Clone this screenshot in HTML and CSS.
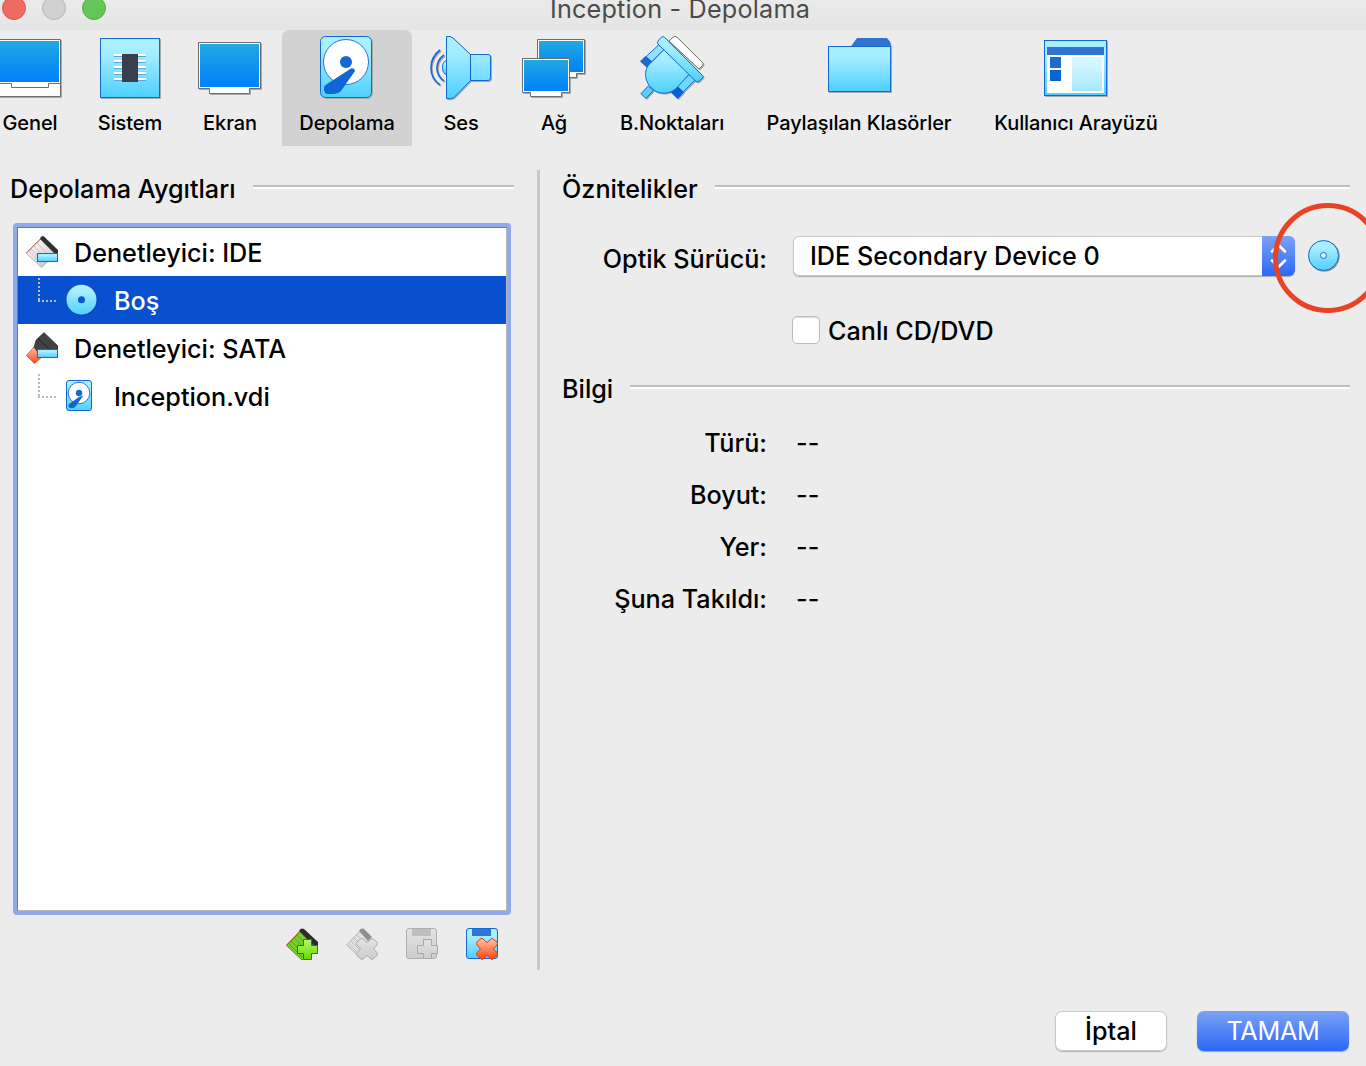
FILE: index.html
```html
<!DOCTYPE html>
<html lang="tr">
<head>
<meta charset="utf-8">
<title>Inception - Depolama</title>
<link rel="stylesheet" href="styles.css">
</head>
<body>
<svg class="defs" width="0" height="0">
  <defs>
    <linearGradient id="screen" x1="0" y1="0" x2="0" y2="1"><stop offset="0" stop-color="#20a9e2"/><stop offset="1" stop-color="#0080fb"/></linearGradient>
    <linearGradient id="ice" x1="0" y1="0" x2="0" y2="1"><stop offset="0" stop-color="#aaf1ff"/><stop offset=".25" stop-color="#a6edff"/><stop offset="1" stop-color="#4dd0ff"/></linearGradient>
    <linearGradient id="green" x1="0" y1="0" x2="0" y2="1"><stop offset="0" stop-color="#b4f76c"/><stop offset="1" stop-color="#62d800"/></linearGradient>
    <linearGradient id="red" x1="0" y1="0" x2="0" y2="1"><stop offset="0" stop-color="#ffc3a6"/><stop offset="1" stop-color="#ff4318"/></linearGradient>
    <linearGradient id="grey" x1="0" y1="0" x2="0" y2="1"><stop offset="0" stop-color="#e4e4e4"/><stop offset="1" stop-color="#cccccc"/></linearGradient>
    <linearGradient id="silver" x1="0" y1="0" x2="1" y2="1"><stop offset="0" stop-color="#ffffff"/><stop offset="1" stop-color="#c4c4c4"/></linearGradient>
  </defs>
</svg>

<header class="titlebar">
  <div class="lights"><i class="light close"></i><i class="light min"></i><i class="light max"></i></div>
  <h1 class="title">Inception - Depolama</h1>
</header>

<nav class="toolbar">
  <a class="tool">
    <svg class="icon" viewBox="-4 34 68 68">
      <path d="M-5 39.5H60.5V96.5H-5Z" fill="#fff" stroke="#6d6d6d"/>
      <path d="M-3 41H59V82H-3Z" fill="url(#screen)"/>
      <path d="M-3 83.5H11.5V87.5H48.5V83.5H60" fill="none" stroke="#6d6d6d"/>
    </svg>
    <span>Genel</span>
  </a>
  <a class="tool">
    <svg class="icon" viewBox="96 34 68 68">
      <rect x="100.500" y="38.500" width="59" height="59" fill="url(#ice)" stroke="#1267d0"/>
      <path d="M114 55H146M114 61H146M114 67H146M114 73H146M114 79H146" stroke="#fff" stroke-width="2"/>
      <path d="M114 56.500H146M114 62.500H146M114 68.500H146M114 74.500H146M114 80.500H146" stroke="#5ba6dc"/>
      <rect x="122" y="54" width="16" height="28" fill="#3b3f4b"/>
    </svg>
    <span>Sistem</span>
  </a>
  <a class="tool">
    <svg class="icon" viewBox="196 34 68 68">
      <path d="M198.500 42.500H260.500V88.500H249.500V93.500H209.500V88.500H198.500Z" fill="#fff" stroke="#6d6d6d"/>
      <rect x="200" y="44" width="59" height="43" fill="url(#screen)"/>
    </svg>
    <span>Ekran</span>
  </a>
  <a class="tool active">
    <svg class="icon" viewBox="313 34 68 68">
      <rect x="320.500" y="36.500" width="51" height="61" rx="5" fill="url(#ice)" stroke="#1267d0"/>
      <circle cx="346" cy="62" r="22.500" fill="#fff" stroke="#2a73d2"/>
      <circle cx="346" cy="62" r="6" fill="#1569d3"/>
      <path d="M351 68.500Q354.500 67.500 355 71L341 91Q338 94 334 94H327Q323.500 93 324 87Q324.500 85.500 327 84Z" fill="#0f66d4"/>
    </svg>
    <span>Depolama</span>
  </a>
  <a class="tool">
    <svg class="icon" viewBox="427 34 68 68">
      <path d="M447 60.500Q442.500 61 442.500 67.500T447 74.500Z" fill="url(#ice)" stroke="#1267d0"/>
      <path d="M440 50Q431 57 431 68T440 85M444 55Q437 60 437 68T444 81" fill="none" stroke="#1f6bd0" stroke-width="1.700"/>
      <path d="M446.500 36.500H450L453 38L470.500 54.500H488Q490.500 54.500 490.500 57V78Q490.500 80.500 488 80.500H470.500L454 97.500Q451 99.500 446.500 98.500Z" fill="url(#ice)" stroke="#1267d0"/>
      <path d="M470.500 54V81" stroke="#1267d0"/>
    </svg>
    <span>Ses</span>
  </a>
  <a class="tool">
    <svg class="icon" viewBox="520 34 68 68">
      <path d="M537.500 39.500H584.500V73.500H576.500V77.500H550V73.500H537.500Z" fill="#fff" stroke="#6d6d6d"/>
      <rect x="539" y="41" width="44" height="31" fill="url(#screen)"/>
      <path d="M522.500 58.500H569.500V92.500H561.500V96.500H530.500V92.500H522.500Z" fill="#fff" stroke="#6d6d6d"/>
      <rect x="524" y="60" width="44" height="31" fill="url(#screen)"/>
    </svg>
    <span>Ağ</span>
  </a>
  <a class="tool">
    <svg class="icon" viewBox="638 34 68 68">
      <path d="M669 41L673 37.200Q675 35.500 677 37.200L702.500 62.500Q703.800 64 702.500 65.500L699 69Z" fill="#fff" stroke="#6d6d6d"/>
      <path d="M659.300 44.300L664.300 49.300 652 61.700 646 56.700Z" fill="#8fe3ff" stroke="#1267d0"/>
      <path d="M645.500 56L652.300 62.300 647 67.800 640 61.200Z" fill="#1b6ad2"/>
      <path d="M689.300 74L695.300 80 683 92 677 86.500Z" fill="#6cd9ff" stroke="#1267d0"/>
      <path d="M677.500 86L684 92.300 677.700 98.900 671 92.500Z" fill="#0062d6"/>
      <path d="M648.300 86L653.300 90.500 646 98.500 641 93.500Z" fill="#57d0fb" stroke="#1267d0"/>
      <path d="M664.300 49.300L689.300 74L678 86.500C672 94 659 96 651.500 88C644 81 643 68 652 61.700Z" fill="url(#ice)" stroke="#1267d0"/>
      <path d="M658 44Q656.800 42.500 658 41L661 37.500Q663 36 664.500 37.200L702.500 75.500Q703.800 76.800 702.500 78L699 81.300Q697.500 82.500 696 81.500Z" fill="url(#ice)" stroke="#1267d0"/>
    </svg>
    <span>B.Noktaları</span>
  </a>
  <a class="tool">
    <svg class="icon" viewBox="825 34 68 68">
      <path d="M850.500 47L857 38H887L890 42 891 47Z" fill="#3074d2"/>
      <rect x="828.500" y="46.500" width="62" height="45" fill="url(#ice)" stroke="#1267d0"/>
    </svg>
    <span>Paylaşılan Klasörler</span>
  </a>
  <a class="tool">
    <svg class="icon" viewBox="1042 34 68 68">
      <rect x="1044.500" y="40.500" width="62" height="55" fill="url(#ice)" stroke="#1267d0"/>
      <rect x="1047" y="47" width="57" height="46" fill="#fff"/>
      <rect x="1047" y="47" width="57" height="8" fill="#3074d2"/>
      <rect x="1050" y="57" width="11" height="11" fill="#1f6bd2"/>
      <rect x="1050" y="70" width="11" height="11" fill="#0664d4"/>
      <rect x="1072" y="57" width="30" height="34" fill="url(#ice)" opacity=".5"/>
    </svg>
    <span>Kullanıcı Arayüzü</span>
  </a>
</nav>

<main class="content">
  <section class="devices">
    <h2 class="heading">
      <span>Depolama Aygıtları</span>
      <i class="rule"></i>
    </h2>
    <ul class="tree">
      <li class="row">
        <svg class="ctl" viewBox="26 236 32 32">
          <path d="M42 237L57 253 41.500 267.500 26 253Z" fill="url(#silver)" stroke="#9a9a9a" stroke-width=".7"/>
          <path d="M37 243L51 258M34 246L48 261M31 249L45 264M29 251L43 266" stroke="#b8b8b8" stroke-width=".7"/>
          <path d="M26.500 253L41 238.500" stroke="#e2562c"/>
          <path d="M40 239Q41 235 44 236.500L58 250V253H54Z" fill="#303030"/>
          <rect x="37.500" y="253.500" width="20" height="8" fill="url(#ice)" stroke="#1267d0"/>
        </svg>
        <span>Denetleyici: IDE</span>
      </li>
      <li class="row child selected">
        <i class="branch"></i>
        <svg class="disc" viewBox="66 283 32 32">
          <circle cx="82" cy="299.500" r="15.300" fill="#063e9f"/>
          <circle cx="81.500" cy="298.700" r="15" fill="url(#ice)"/>
          <circle cx="81.500" cy="298.700" r="3.500" fill="#0a56cc"/>
        </svg>
        <span>Boş</span>
      </li>
      <li class="row">
        <svg class="ctl" viewBox="26 332 32 32">
          <path d="M34 347L43 356 34.500 363.500 26.500 355.500Z" fill="url(#red)" stroke="#d8481c" stroke-width=".8"/>
          <path d="M44 332.500L58 346V350L50 354H39L34 347L36 340Z" fill="#424242" stroke="#2d2d2d" stroke-width=".6"/>
          <path d="M38 338.500L50 350" stroke="#222"/>
          <rect x="37.500" y="349.500" width="20" height="8" fill="url(#ice)" stroke="#1267d0"/>
        </svg>
        <span>Denetleyici: SATA</span>
      </li>
      <li class="row child">
        <i class="branch"></i>
        <svg class="disc" viewBox="66 380 32 32">
          <rect x="66.500" y="380.500" width="25" height="30" rx="2.500" fill="url(#ice)" stroke="#1267d0"/>
          <circle cx="79" cy="393" r="10.800" fill="#fff" stroke="#2a73d2"/>
          <circle cx="79" cy="393" r="3.200" fill="#1569d3"/>
          <path d="M83.500 395.500L75 407Q74 408.500 70 408Q68 407 69 404L79 397Z" fill="#0f66d4"/>
        </svg>
        <span>Inception.vdi</span>
      </li>
    </ul>
    <div class="actions">
      <svg viewBox="286 928 32 32">
        <path d="M302 929L318 945 302 960 286.500 945.500Z" fill="#72cf25" stroke="#3e7a10" stroke-width=".8"/>
        <path d="M297 935L311 949M294 938L308 952M291 941L305 955M289 944L302 957" stroke="#4f9f18" stroke-width=".8"/>
        <path d="M286.500 945L300 931.500" stroke="#e0411c"/>
        <path d="M299 931Q301 927.500 304 929L318 942V945H313Z" fill="#2c2c2c"/>
        <path d="M303.500 939.500H311.500V945.500H317.500V953.500H311.500V959.500H303.500V953.500H297.500V945.500H303.500Z" fill="url(#green)" stroke="#2c7c08"/>
      </svg>
      <svg viewBox="346 928 32 32">
        <path d="M361 930L372 941 361 958 346.500 945Z" fill="#e0e0e0" stroke="#a8a8a8" stroke-width=".8"/>
        <path d="M357 935L366 944M354 938L363 947M351 941L360 950M349 944L358 953" stroke="#b6b6b6" stroke-width=".8"/>
        <path d="M359 931Q361 927.500 364 929L372 937 368 941Z" fill="#8f8f8f"/>
        <path d="M361 938.500Q362 938 363 939L367 942.500 371 939Q372 938 373 939L377 942Q378 943.500 377 945L373.500 949 377 952.500Q378 954 377 955.500L373 959Q372 960 371 959L367 955.500 363 959Q362 960 361 959L357 955.500Q356 954 357 952.500L360.500 949 357 945Q356 943.500 357 942Z" fill="url(#grey)" stroke="#ababab"/>
      </svg>
      <svg viewBox="406 928 32 32">
        <rect x="406.500" y="928.500" width="30" height="30" rx="2.500" fill="url(#grey)" stroke="#adadad"/>
        <rect x="412" y="929" width="19" height="7" fill="#bfbfbf"/>
        <path d="M423.500 939.500H431.500V945.500H437.500V953.500H431.500V958.500H423.500V953.500H417.500V945.500H423.500Z" fill="url(#grey)" stroke="#a8a8a8"/>
      </svg>
      <svg viewBox="466 928 32 32">
        <rect x="466.500" y="928.500" width="31" height="30" rx="2.500" fill="url(#ice)" stroke="#1267d0"/>
        <rect x="472" y="929" width="19" height="7" fill="#2f75d3"/>
        <path d="M481 938.500Q482 938 483 939L487 942.500 491 939Q492 938 493 939L497 942Q498 943.500 497 945L493.500 949 497 952.500Q498 954 497 955.500L493 959Q492 960 491 959L487 955.500 483 959Q482 960 481 959L477 955.500Q476 954 477 952.500L480.500 949 477 945Q476 943.500 477 942Z" fill="url(#red)" stroke="#dc3c12"/>
      </svg>
    </div>
  </section>

  <section class="attributes">
    <h2 class="heading">
      <span>Öznitelikler</span>
      <i class="rule"></i>
    </h2>
    <div class="drive">
      <span class="label">Optik Sürücü:</span>
      <div class="combo">
        <span class="combo-text">IDE Secondary Device 0</span>
        <svg class="combo-arrows" viewBox="1262 236 33 40">
          <path d="M1272 251.500L1278.500 245 1285 251.500M1272 260.500L1278.500 267 1285 260.500" fill="none" stroke="#fff" stroke-width="2.600" stroke-linecap="round" stroke-linejoin="round"/>
        </svg>
      </div>
      <div class="pick">
        <svg class="pick-disc" viewBox="1308 240 32 32">
          <circle cx="1324.300" cy="256.300" r="15.500" fill="#9a9a9a"/>
          <circle cx="1323.500" cy="255.500" r="15" fill="url(#ice)" stroke="#1267d0"/>
          <circle cx="1323.500" cy="255.500" r="3" fill="#e4f6fb" stroke="#1267d0"/>
        </svg>
        <i class="mark"></i>
      </div>
    </div>
    <label class="live"><i class="box"></i><span>Canlı CD/DVD</span></label>
    <h2 class="heading info-heading">
      <span>Bilgi</span>
      <i class="rule"></i>
    </h2>
    <dl class="info">
      <dt>Türü:</dt><dd>--</dd>
      <dt>Boyut:</dt><dd>--</dd>
      <dt>Yer:</dt><dd>--</dd>
      <dt>Şuna Takıldı:</dt><dd>--</dd>
    </dl>
  </section>
</main>

<footer class="buttons">
  <button class="btn cancel">İptal</button>
  <button class="btn ok">TAMAM</button>
</footer>
</body>
</html>
```
FILE: styles.css
```css
* { box-sizing: border-box; }
body {
  margin: 0;
  width: 1366px;
  height: 1066px;
  overflow: hidden;
  background: #ececec;
  color: #000;
  font: 460 25.2px/32px Inter, "Liberation Sans", sans-serif;
  letter-spacing: 0;
  white-space: nowrap;
  display: flex;
  flex-direction: column;
}
h1, h2, ul, dl, dd { margin: 0; padding: 0; font: inherit; }
i { display: block; }
svg { display: block; flex: none; }
.defs { position: absolute; }

.titlebar {
  display: grid;
  height: 30px;
  flex: none;
  background: linear-gradient(#eaeaea, #e5e5e5);
}
.lights, .title { grid-area: 1 / 1; }
.lights { display: flex; gap: 16px; padding-left: 2px; margin-top: -4px; }
.light { width: 24px; height: 24px; border-radius: 50%; border: 1px solid; }
.close { background: #ed6b60; border-color: #d9574c; }
.min { background: #d1d1d1; border-color: #b6b6b6; }
.max { background: #63c656; border-color: #52ae45; }
.title {
  justify-self: center;
  margin-top: -7px;
  margin-left: -6px;
  color: #4b4b4b;
  font-weight: 400;
  letter-spacing: 0.2px;
}

.toolbar {
  display: grid;
  grid-template-columns: 104px 96px 104px 130px 98px 88px 148px 226px 208px;
  height: 116px;
  flex: none;
  margin-left: -22px;
  font-size: 20px;
  font-weight: 540;
  letter-spacing: -0.1px;
  line-height: 26px;
}
.tool { display: flex; flex-direction: column; align-items: center; padding-top: 4px; gap: 8px; }
.active { background: #d2d2d2; border-radius: 7px 7px 0 0; }
.icon { width: 68px; height: 68px; filter: drop-shadow(1px 1px 0 #aaa); }

.content { display: flex; height: 824px; flex: none; padding-top: 24px; }
.heading { display: flex; align-items: center; height: 32px; gap: 17px; padding-top: 6px; }
.rule { flex: 1; height: 4px; background: linear-gradient(#bdbdbd 50%, #fff 50%); margin-top: -4px; }
.devices { width: 537px; padding: 0 23px 0 10px; }
.tree {
  list-style: none;
  height: 692px;
  margin: 21px -4px 0 3px;
  width: 498px;
  padding: 1px;
  border: 4px solid #90a9e9;
  border-radius: 4px;
  background: #fff;
  box-shadow: inset 0 1px #6079c4, inset 1px 0 #6079c4, inset -1px -1px #b8b8b8;
}
.row { display: flex; align-items: center; height: 48px; padding-left: 8px; gap: 16px; }
.ctl { width: 32px; height: 32px; }
.row span { padding-top: 1px; }
.child { padding-left: 20px; gap: 0; }
.selected { background: #0850d0; color: #fff; }
.branch {
  width: 20px;
  height: 24px;
  margin-top: -20px;
  background:
    repeating-linear-gradient(#bcbcbc 0 2px, transparent 2px 4px) 0 0 / 2px 24px no-repeat,
    repeating-linear-gradient(90deg, #bcbcbc 0 2px, transparent 2px 4px) 0 22px / 20px 2px no-repeat;
}
.disc { width: 32px; height: 32px; margin: 0 16px 0 8px; }
.actions { display: flex; gap: 28px; margin: 13px 0 0 276px; }
.actions svg { width: 32px; height: 32px; }

.attributes { flex: 1; height: 800px; border-left: 3px solid #c9c9c9; padding: 0 16px 0 22px; }
.drive { display: flex; align-items: center; height: 40px; margin-top: 34px; }
.label { width: 205px; text-align: right; padding-top: 6px; }
.combo {
  display: flex;
  justify-content: space-between;
  width: 502px;
  height: 40px;
  margin-left: 26px;
  background: #fff;
  border-radius: 6px;
  overflow: hidden;
  box-shadow: 0 0 0 1px #c9c9c9 inset, 0 1px 1px #aaa;
}
.combo-text { padding: 4px 0 0 17px; }
.combo-arrows { width: 33px; height: 40px; background: linear-gradient(#7ba2f4, #2c68f6); }
.pick { position: relative; margin-left: 13px; }
.pick-disc { width: 32px; height: 32px; }
.mark {
  position: absolute;
  left: -35px;
  top: -37px;
  width: 110px;
  height: 110px;
  border: 5px solid #e94326;
  border-radius: 50%;
}
.live { display: flex; align-items: center; height: 28px; margin: 40px 0 0 230px; gap: 8px; }
.live span { padding-top: 2px; }
.box { width: 28px; height: 28px; border: 1px solid #bcbcbc; border-radius: 5px; background: #fff; box-shadow: inset 0 1px 1px #ddd; }
.info-heading { margin-top: 26px; }
.info { display: grid; grid-template-columns: 205px auto; column-gap: 29px; grid-auto-rows: 52px; align-items: center; margin-top: 15px; }
.info dt { text-align: right; }

.buttons { display: flex; justify-content: flex-end; gap: 30px; padding: 41px 17px 0 0; }
.btn {
  height: 40px;
  border: 0;
  border-radius: 7px;
  padding: 0;
  font: inherit;
}
.cancel { width: 112px; background: #fff; box-shadow: inset 0 0 0 1px #c9c9c9, 0 1px 1px #b4b4b4; }
.ok { width: 152px; color: #fff; font-weight: 400; letter-spacing: -0.3px; background: linear-gradient(#7ba2f4, #2c68f6); box-shadow: 0 1px 1px #8ba6de; }
```
